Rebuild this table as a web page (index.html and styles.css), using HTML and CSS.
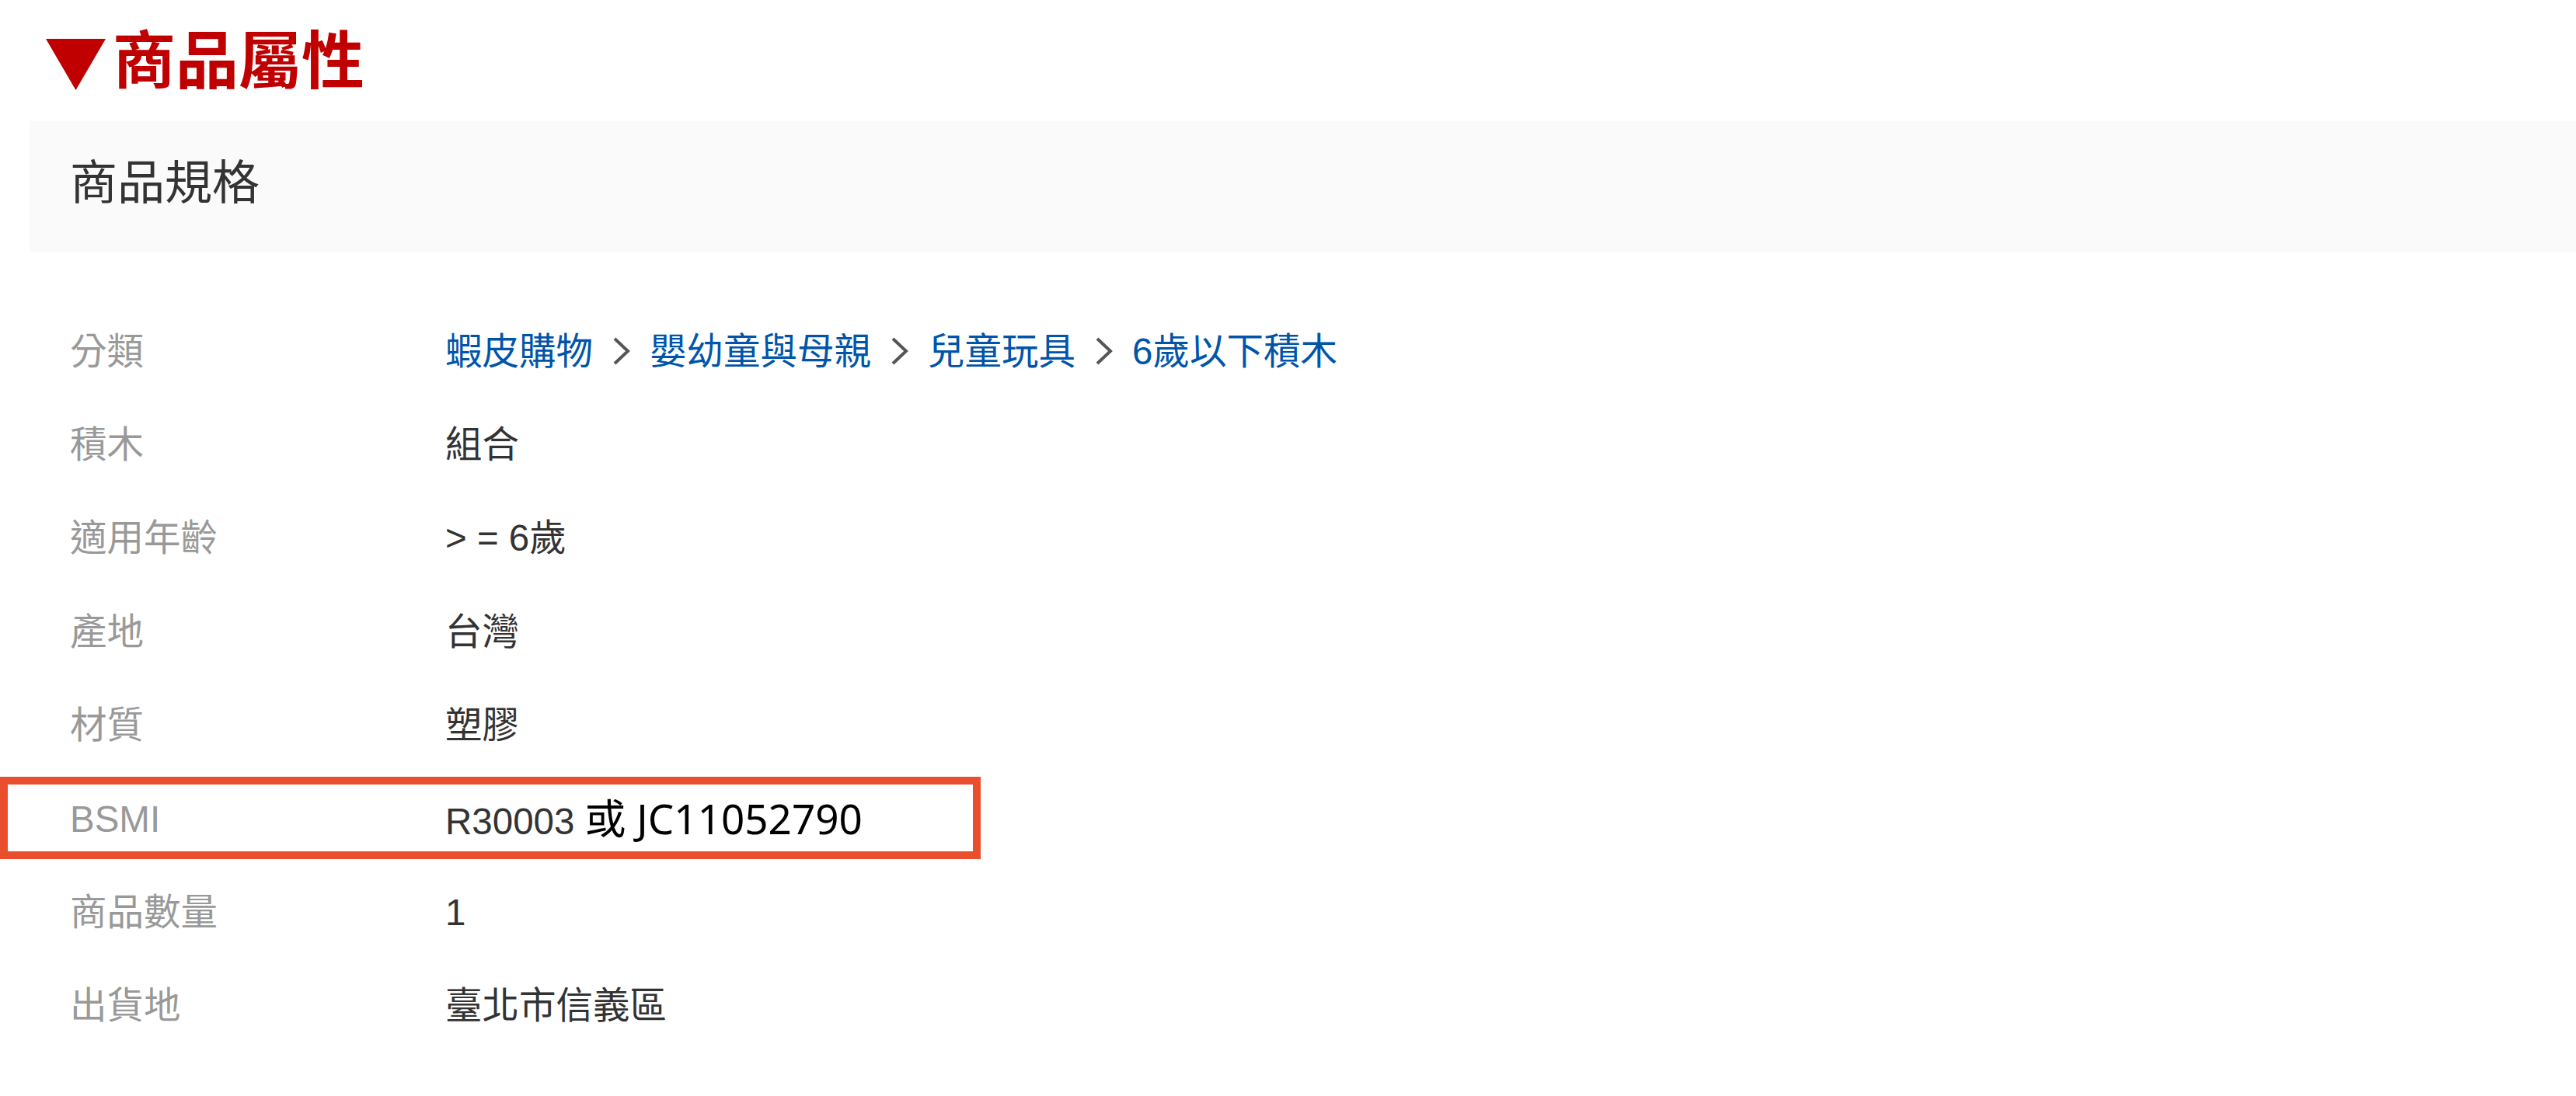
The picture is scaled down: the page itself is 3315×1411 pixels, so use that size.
FILE: index.html
```html
<!DOCTYPE html>
<html lang="zh-Hant">
<head>
<meta charset="utf-8">
<title>商品屬性</title>
<link rel="stylesheet" href="styles.css">
</head>
<body>
<div class="page">
  <h2 class="title">
    <svg class="tri" width="77" height="66" viewBox="0 0 77 66"><polygon points="0,0 77,0 38.5,66" fill="#c00000"/></svg>
    <span class="title-text">商品屬性</span>
  </h2>
  <section class="spec">
    <div class="spec-head">商品規格</div>
    <div class="spec-body">
      <div class="row">
        <div class="label">分類</div>
        <div class="value crumbs">
          <a class="crumb" href="#">蝦皮購物</a>
          <svg class="sep" width="23" height="36" viewBox="0 0 23 36"><path d="M3 2 L20 18 L3 34" fill="none" stroke="#555" stroke-width="4"/></svg>
          <a class="crumb" href="#">嬰幼童與母親</a>
          <svg class="sep" width="23" height="36" viewBox="0 0 23 36"><path d="M3 2 L20 18 L3 34" fill="none" stroke="#555" stroke-width="4"/></svg>
          <a class="crumb" href="#">兒童玩具</a>
          <svg class="sep" width="23" height="36" viewBox="0 0 23 36"><path d="M3 2 L20 18 L3 34" fill="none" stroke="#555" stroke-width="4"/></svg>
          <a class="crumb" href="#">6歲以下積木</a>
        </div>
      </div>
      <div class="row"><div class="label">積木</div><div class="value">組合</div></div>
      <div class="row"><div class="label">適用年齡</div><div class="value">&gt; = 6歲</div></div>
      <div class="row"><div class="label">產地</div><div class="value">台灣</div></div>
      <div class="row"><div class="label">材質</div><div class="value">塑膠</div></div>
      <div class="row"><div class="label">BSMI</div><div class="value">R30003 <span class="alt">或 JC11052790</span></div></div>
      <div class="row"><div class="label">商品數量</div><div class="value">1</div></div>
      <div class="row"><div class="label">出貨地</div><div class="value">臺北市信義區</div></div>
    </div>
  </section>
  <div class="highlight"></div>
</div>
</body>
</html>
```
FILE: styles.css
```css
html, body {
  margin: 0;
  padding: 0;
  background: #ffffff;
}
body {
  font-family: "Liberation Sans", "Noto Sans CJK TC", sans-serif;
  width: 3315px;
  height: 1411px;
  overflow: hidden;
}
.page {
  position: relative;
  height: 1411px;
}
.title {
  display: flex;
  align-items: flex-start;
  margin: 0;
  padding: 31px 0 0 59px;
  color: #c00000;
  font-family: "Noto Sans CJK TC", sans-serif;
  font-weight: 700;
  font-size: 81px;
  line-height: 1;
}
.tri {
  display: block;
  margin-top: 19px;
  margin-right: 9px;
}
.spec {
  margin-top: 40px;
}
.spec-head {
  margin-left: 38px;
  height: 168px;
  box-sizing: border-box;
  background: #fafafa;
  display: flex;
  align-items: center;
  padding: 0 0 6px 52px;
  font-size: 61px;
  line-height: 1.2;
  color: #333333;
}
.spec-body {
  padding-top: 68px;
}
.row {
  display: flex;
  align-items: center;
  height: 120.4px;
  padding-left: 90px;
  font-size: 47.5px;
  line-height: 1.2;
}
.label {
  width: 483px;
  flex: none;
  color: #999999;
}
.value {
  color: #333333;
}
.crumbs {
  display: flex;
  align-items: center;
}
.crumb {
  color: #0055aa;
  text-decoration: none;
}
.sep {
  display: block;
  margin: 0 25px;
}
.alt {
  font-family: "Noto Sans", "Noto Sans CJK TC", sans-serif;
  font-size: 53px;
  color: #000000;
}
.highlight {
  position: absolute;
  left: 0;
  top: 1000px;
  width: 1262px;
  height: 106px;
  box-sizing: border-box;
  border: 10px solid #e94e2d;
}
```
